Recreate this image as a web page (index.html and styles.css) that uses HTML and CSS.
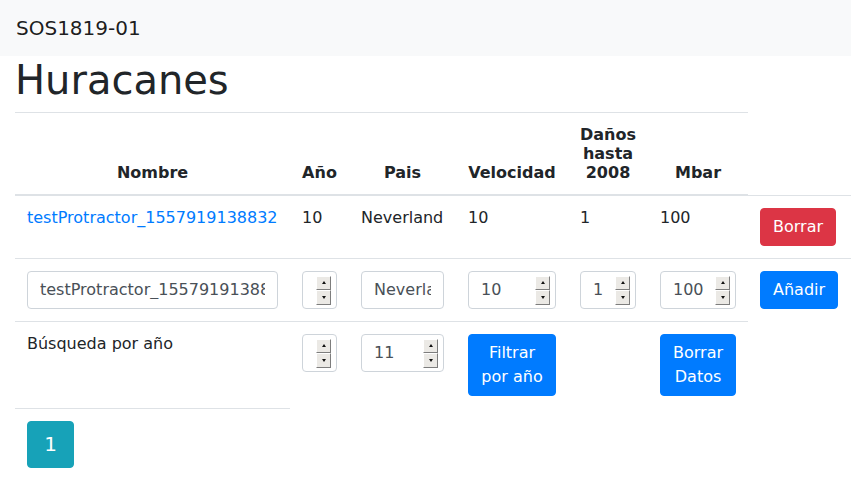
FILE: index.html
```html
<!DOCTYPE html>
<html lang="es">
<head>
<meta charset="utf-8">
<title>Huracanes</title>
<link rel="stylesheet" href="styles.css">
</head>
<body>
<nav class="navbar"><span class="brand">SOS1819-01</span></nav>
<main class="content">
  <h1 class="title">Huracanes</h1>
  <table class="grid">
    <colgroup>
      <col class="c-name"><col class="c-year"><col class="c-country"><col class="c-speed"><col class="c-damage"><col class="c-mbar"><col class="c-action">
    </colgroup>
    <thead>
      <tr>
        <th>Nombre</th>
        <th>Año</th>
        <th>Pais</th>
        <th>Velocidad</th>
        <th>Daños hasta 2008</th>
        <th>Mbar</th>
      </tr>
    </thead>
    <tbody>
      <tr>
        <td><a class="link" href="#">testProtractor_1557919138832</a></td>
        <td>10</td>
        <td>Neverland</td>
        <td>10</td>
        <td>1</td>
        <td>100</td>
        <td><button class="btn btn-danger">Borrar</button></td>
      </tr>
      <tr>
        <td><input class="field" type="text" value="testProtractor_1557919138832"></td>
        <td><div class="num"><input class="num-input" type="text" value=""><span class="spin"><span class="spin-up"></span><span class="spin-down"></span></span></div></td>
        <td><input class="field" type="text" value="Neverland"></td>
        <td><div class="num"><input class="num-input" type="text" value="10"><span class="spin"><span class="spin-up"></span><span class="spin-down"></span></span></div></td>
        <td><div class="num"><input class="num-input" type="text" value="1"><span class="spin"><span class="spin-up"></span><span class="spin-down"></span></span></div></td>
        <td><div class="num"><input class="num-input" type="text" value="100"><span class="spin"><span class="spin-up"></span><span class="spin-down"></span></span></div></td>
        <td><button class="btn btn-primary">Añadir</button></td>
      </tr>
      <tr class="search-row">
        <td>Búsqueda por año</td>
        <td><div class="num"><input class="num-input" type="text" value=""><span class="spin"><span class="spin-up"></span><span class="spin-down"></span></span></div></td>
        <td><div class="num"><input class="num-input" type="text" value="11"><span class="spin"><span class="spin-up"></span><span class="spin-down"></span></span></div></td>
        <td><button class="btn btn-primary">Filtrar por año</button></td>
        <td></td>
        <td><button class="btn btn-primary">Borrar Datos</button></td>
      </tr>
      <tr>
        <td><ul class="pagination"><li><a class="page-link" href="#">1</a></li></ul></td>
      </tr>
    </tbody>
  </table>
</main>
</body>
</html>
```
FILE: styles.css
```css
* { box-sizing: border-box; }
html, body { margin: 0; }
body {
  font-family: "DejaVu Sans", sans-serif;
  font-size: 16px;
  line-height: normal;
  color: #212529;
  background: #fff;
}
.navbar {
  background: #f8f9fa;
  padding: 8px 16px;
  height: 56px;
  display: flex;
  align-items: center;
}
.brand {
  font-size: 20px;
  line-height: 30px;
  padding: 5px 0;
  color: rgba(0,0,0,0.9);
}
.content { padding: 0 0 0 15px; }
.title {
  margin: 0 0 8px 0;
  padding-left: 0;
  font-size: 40px;
  font-weight: normal;
  line-height: 48px;
}
.grid {
  border-collapse: collapse;
  table-layout: fixed;
  width: 836px;
  margin-bottom: 16px;
}
.c-name { width: 275px; }
.c-year { width: 59px; }
.c-country { width: 107px; }
.c-speed { width: 112px; }
.c-damage { width: 80px; }
.c-mbar { width: 100px; }
.c-action { width: 103px; }
.grid th, .grid td {
  padding: 12px;
  border-top: 1px solid #dee2e6;
}
.grid th {
  vertical-align: bottom;
  border-bottom: 2px solid #dee2e6;
  text-align: center;
  font-weight: bold;
}
.grid td { vertical-align: top; }
.grid .search-row td { padding-bottom: 13px; }
.link { color: #007bff; text-decoration: none; }
.field, .num {
  display: block;
  width: 100%;
  height: 38px;
  border: 1px solid #ced4da;
  border-radius: 4px;
  background: #fff;
  font: inherit;
  color: #495057;
}
.field {
  padding: 6px 12px;
  line-height: 24px;
}
.num {
  display: flex;
  align-items: center;
  padding: 0 5px 0 12px;
  overflow: hidden;
}
.num-input {
  flex: 1 1 auto;
  min-width: 0;
  width: 0;
  border: 0;
  padding: 0;
  background: transparent;
  font: inherit;
  color: #495057;
  outline: none;
}
.spin {
  flex: none;
  width: 15px;
  height: 29px;
  display: flex;
  flex-direction: column;
  margin-top: 1px;
}
.spin-up, .spin-down {
  flex: 1;
  background: #ebe9e5;
  border: 1px solid;
  border-color: #fff #7d7d7d #7d7d7d #fff;
  display: flex;
  align-items: center;
  justify-content: center;
}
.spin-up::before, .spin-down::before {
  content: "";
  width: 0;
  height: 0;
  border-left: 2px solid transparent;
  border-right: 2px solid transparent;
}
.spin-up::before { border-bottom: 3px solid #111; }
.spin-down::before { border-top: 3px solid #111; }
.btn {
  display: inline-block;
  font: inherit;
  line-height: 24px;
  padding: 6px 12px;
  border: 1px solid transparent;
  border-radius: 4px;
  color: #fff;
  text-align: center;
  cursor: pointer;
}
.btn-danger { background: #dc3545; border-color: #dc3545; }
.btn-primary { background: #007bff; border-color: #007bff; }
.pagination {
  list-style: none;
  margin: 0;
  padding: 0;
  display: flex;
}
.page-link {
  display: block;
  width: 47px;
  height: 47px;
  line-height: 45px;
  text-align: center;
  font-size: 20px;
  color: #fff;
  background: #17a2b8;
  border: 1px solid #17a2b8;
  border-radius: 4px;
  text-decoration: none;
}
```
